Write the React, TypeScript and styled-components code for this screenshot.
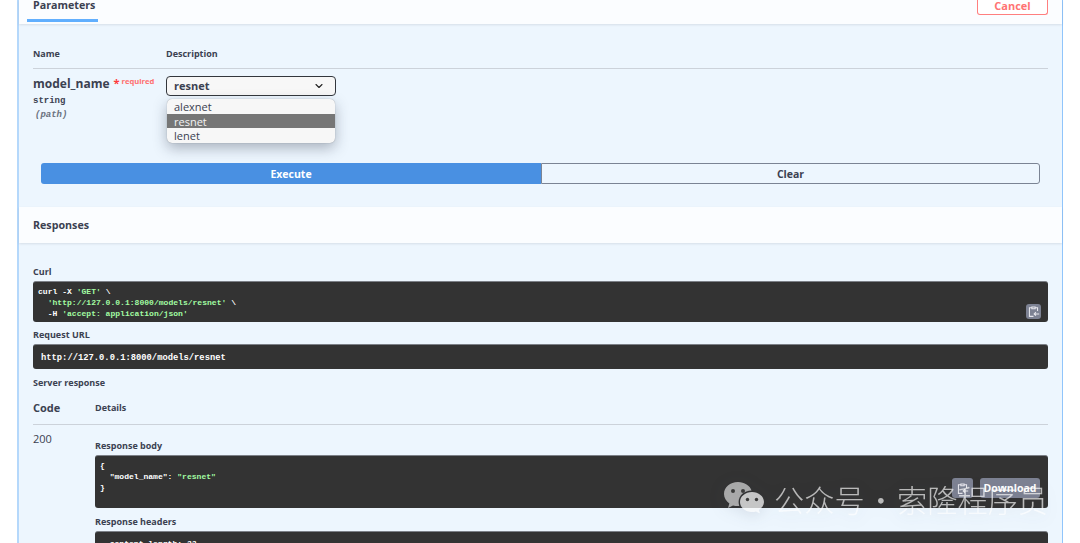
import styled, { createGlobalStyle } from 'styled-components'
import { ChevronDown } from 'lucide-react'

const GlobalStyle = createGlobalStyle`
    html, body {
        margin: 0;
        padding: 0;
        background: #fff;
    }

    body {
        height: 543px;
        overflow: hidden;
        font-family: "Open Sans", "Liberation Sans", sans-serif;
        color: #3b4151;
    }
`

const Page = styled.div`
    position: relative;
    height: 543px;
    overflow: hidden;
    padding: 0 17px 0 17px;
`

const Block = styled.div`
    border-left: 2px solid #b5d8fb;
    border-right: 1px solid #90c5fb;
    background: #edf6fe;
    height: 720px;
`

const SectionBar = styled.div<{ $height: number }>`
    display: flex;
    align-items: center;
    justify-content: space-between;
    height: ${p => p.$height}px;
    box-sizing: border-box;
    padding: 0 14px;
    background: #fbfdff;
    box-shadow: 0 1px 2px rgba(59, 65, 81, 0.12);
`

const TabBar = styled(SectionBar)`
    align-items: flex-start;
    padding: 0 14px 0 8px;
`

const Tab = styled.div`
    width: 71px;
    height: 22px;
    box-sizing: border-box;
    padding: 0 0 0 6px;
    border-bottom: 3px solid #61affe;
    font-size: 10.7px;
    font-weight: 700;
    line-height: 10px;
`

const CancelButton = styled.button`
    width: 71px;
    height: 16px;
    margin-top: -1px;
    padding: 0 0 2px;
    background: #fff;
    border: 1px solid #ff7f7f;
    border-top: none;
    border-radius: 0 0 3px 3px;
    color: #ff7373;
    font: 700 11px/12px "Open Sans", sans-serif;
`

const Params = styled.div`
    padding: 0 14px;
    height: 183px;
    box-sizing: border-box;
`

const ParamHead = styled.div`
    display: grid;
    grid-template-columns: 133px 1fr;
    height: 45px;
    box-sizing: border-box;
    padding-top: 23px;
    border-bottom: 1px solid #ccd2da;
    font-size: 9px;
    font-weight: 700;
    line-height: 13px;
`

const ParamRow = styled.div`
    display: grid;
    grid-template-columns: 133px 1fr;
    height: 94px;
    box-sizing: border-box;
    padding-top: 7px;
`

const ParamName = styled.div`
    font-size: 12px;
    font-weight: 700;
    line-height: 15px;
    white-space: nowrap;

    sup {
        margin-left: 4px;
        font-size: 11px;
        line-height: 0;
        vertical-align: 1px;
        color: #ff3b3b;
    }

    small {
        margin-left: 2px;
        font-size: 7.6px;
        font-weight: 700;
        position: relative;
        top: -4px;
        color: #ff6f6f;
    }
`

const ParamType = styled.div`
    margin-top: 2px;
    font: 700 9px/12px "Liberation Mono", monospace;
`

const ParamIn = styled.div`
    margin: 1px 0 0 2px;
    font: italic 600 9px/14px "Liberation Mono", monospace;
    color: #6b7280;
`

const SelectWrap = styled.div`
    position: relative;
    width: 170px;
`

const SelectBox = styled.div`
    display: flex;
    align-items: center;
    justify-content: space-between;
    height: 20px;
    box-sizing: border-box;
    padding: 0 10px 1px 7px;
    background: #f7f7f7;
    border: 1px solid #33373d;
    border-radius: 4px;
    font-size: 11px;
    font-weight: 700;
`

const Menu = styled.div`
    position: absolute;
    top: 23px;
    left: 1px;
    width: 168px;
    padding: 0;
    overflow: hidden;
    background: #f7f7f7;
    border-radius: 5px;
    box-shadow: 0 5px 14px rgba(40, 50, 70, 0.35), 0 0 1px rgba(0, 0, 0, 0.4);
`

const MenuItem = styled.div<{ $active?: boolean }>`
    height: 14.7px;
    padding-left: 7px;
    font-size: 11px;
    line-height: 15px;
    color: ${p => (p.$active ? '#f3f3f3' : '#3b4151')};
    background: ${p => (p.$active ? '#767676' : 'transparent')};
`

const ActionRow = styled.div`
    display: grid;
    grid-template-columns: 500px 1fr;
    margin: 0 8px;
    height: 21px;
`

const ActionButton = styled.div<{ $primary?: boolean }>`
    display: flex;
    align-items: center;
    justify-content: center;
    font-size: 10.5px;
    font-weight: 700;
    color: ${p => (p.$primary ? '#fff' : '#3b4151')};
    background: ${p => (p.$primary ? '#4990e2' : 'transparent')};
    border: ${p => (p.$primary ? 'none' : '1px solid #7b8494')};
    border-radius: ${p => (p.$primary ? '3px 0 0 3px' : '0 3px 3px 0')};
`

const BarTitle = styled.div`
    font-size: 10.7px;
    font-weight: 700;
`

const ResponsesBody = styled.div`
    padding: 22px 14px 0 14px;
`

const Label = styled.div<{ $gap?: number }>`
    margin-top: ${p => p.$gap ?? 0}px;
    font-size: 9px;
    font-weight: 700;
    line-height: 14px;
`

const Code = styled.pre<{ $height: number }>`
    position: relative;
    height: ${p => p.$height}px;
    box-sizing: border-box;
    margin: 2px 0 0;
    padding: 4px 5px 0;
    background: #333;
    border-top: 1px solid #7c8087;
    border-radius: 3px;
    color: #fff;
    font: 700 8.05px/11px "Liberation Mono", monospace;
    overflow: hidden;
`

const UrlCode = styled(Code)`
    padding: 8px 8px 0;
    font-size: 8.8px;
    line-height: 11px;
`

const HeadersCode = styled(Code)`
    padding-top: 6px;
`

const Str = styled.span`
    color: #a2fca2;
`

const CopyButton = styled.div`
    position: absolute;
    right: 7px;
    bottom: 3px;
    display: flex;
    align-items: center;
    justify-content: center;
    width: 15px;
    height: 15px;
    border-radius: 3px;
    background: #7d8293;
`

const ResponseHead = styled.div`
    display: grid;
    grid-template-columns: 62px 1fr;
    align-items: center;
    height: 34px;
    margin-top: 0;
    border-bottom: 1px solid #ccd2da;
    font-size: 9px;
    font-weight: 700;
`

const CodeTitle = styled.span`
    font-size: 11px;
`

const ResponseRow = styled.div`
    display: grid;
    grid-template-columns: 62px 1fr;
`

const StatusCode = styled.div`
    padding-top: 6px;
    font-size: 11px;
    line-height: 16px;
`

const FloatButtons = styled.div`
    position: absolute;
    right: 8px;
    bottom: 10px;
    display: flex;
    gap: 7px;
`

const FloatButton = styled.div<{ $width: number }>`
    width: ${p => p.$width}px;
    height: 20px;
    display: flex;
    align-items: center;
    justify-content: center;
    border-radius: 3px;
    background: #7d8293;
    font: 700 10.5px "Open Sans", sans-serif;
    color: #fff;
`

const Watermark = styled.div`
    position: absolute;
    left: 723px;
    top: 481px;
    display: flex;
    align-items: center;
    gap: 9px;
    pointer-events: none;
    filter: drop-shadow(0 3px 8px rgba(40, 50, 70, 0.18));
`

const WatermarkText = styled.span`
    font-family: "Noto Sans CJK SC", sans-serif;
    font-size: 30.2px;
    font-weight: 300;
    line-height: 36px;
    word-spacing: -5.5px;
    white-space: nowrap;
    color: rgba(255, 255, 255, 0.66);
`

const ClipboardIcon = () => (
    <svg width="13" height="13" viewBox="0 0 16 16" fill="none" stroke="#e8e8ee" strokeWidth="1.3">
        <path d="M6 2.5h4v2H6zM6 3.5H3v10.5h5M10 3.5h3v4" />
        <path d="M15 11H9M11 8.8 8.8 11l2.2 2.2" />
    </svg>
)

const WeChatLogo = () => (
    <svg width="42" height="36" viewBox="0 0 42 36">
        <path
            d="M15 1C7 1 1 6.300 1 13c0 3.900 2.100 7.200 5.400 9.400L5 27l5-2.600c1.600.4 3.200.7 5 .7h1.300c-.5-1.400-.7-2.600-.7-4 0-6.400 5.700-11.500 12.900-11.500C27 4.500 21.500 1 15 1z"
            fill="rgba(255,255,255,0.58)"
        />
        <path
            d="M29 11c-6.600 0-12 4.400-12 10s5.400 10 12 10c1.400 0 2.700-.2 4-.6l4 2.200-1.100-3.700C38.900 27 41 24.200 41 21c0-5.600-5.400-10-12-10z"
            fill="rgba(255,255,255,0.72)"
        />
        <circle cx="10" cy="10" r="2" fill="#3a3a3a" />
        <circle cx="20" cy="10" r="2" fill="#3a3a3a" />
        <circle cx="24.500" cy="18.500" r="1.700" fill="#3a3a3a" />
        <circle cx="33.500" cy="18.500" r="1.700" fill="#3a3a3a" />
    </svg>
)

export default function App() {
    return (
        <>
            <GlobalStyle />
            <Page>
                <Block>
                    <TabBar $height={24}>
                        <Tab>Parameters</Tab>
                        <CancelButton>Cancel</CancelButton>
                    </TabBar>

                    <Params>
                        <ParamHead>
                            <span>Name</span>
                            <span>Description</span>
                        </ParamHead>
                        <ParamRow>
                            <div>
                                <ParamName>
                                    model_name<sup>*</sup><small>required</small>
                                </ParamName>
                                <ParamType>string</ParamType>
                                <ParamIn>(path)</ParamIn>
                            </div>
                            <SelectWrap>
                                <SelectBox>
                                    resnet
                                    <ChevronDown size={12} strokeWidth={2.2} color="#222" />
                                </SelectBox>
                                <Menu>
                                    <MenuItem>alexnet</MenuItem>
                                    <MenuItem $active>resnet</MenuItem>
                                    <MenuItem>lenet</MenuItem>
                                </Menu>
                            </SelectWrap>
                        </ParamRow>
                        <ActionRow>
                            <ActionButton $primary>Execute</ActionButton>
                            <ActionButton>Clear</ActionButton>
                        </ActionRow>
                    </Params>

                    <SectionBar $height={36}>
                        <BarTitle>Responses</BarTitle>
                    </SectionBar>

                    <ResponsesBody>
                        <Label>Curl</Label>
                        <Code $height={41}>
                            {'curl -X '}<Str>'GET'</Str>{' \\\n  '}
                            <Str>'http://127.0.0.1:8000/models/resnet'</Str>{' \\\n  -H '}
                            <Str>'accept: application/json'</Str>
                            <CopyButton><ClipboardIcon /></CopyButton>
                        </Code>

                        <Label $gap={6}>Request URL</Label>
                        <UrlCode $height={25}>http://127.0.0.1:8000/models/resnet</UrlCode>

                        <Label $gap={7}>Server response</Label>
                        <ResponseHead>
                            <CodeTitle>Code</CodeTitle>
                            <span>Details</span>
                        </ResponseHead>

                        <ResponseRow>
                            <StatusCode>200</StatusCode>
                            <div>
                                <Label $gap={14}>Response body</Label>
                                <Code $height={53}>
                                    {'{\n  "model_name": '}<Str>"resnet"</Str>{'\n}'}
                                    <FloatButtons>
                                        <FloatButton $width={21}><ClipboardIcon /></FloatButton>
                                        <FloatButton $width={60}>Download</FloatButton>
                                    </FloatButtons>
                                </Code>
                                <Label $gap={7}>Response headers</Label>
                                <HeadersCode $height={60}>{'  content-length: 22'}</HeadersCode>
                            </div>
                        </ResponseRow>
                    </ResponsesBody>
                </Block>

                <Watermark>
                    <WeChatLogo />
                    <WatermarkText>公众号 · 索隆程序员</WatermarkText>
                </Watermark>
            </Page>
        </>
    )
}
